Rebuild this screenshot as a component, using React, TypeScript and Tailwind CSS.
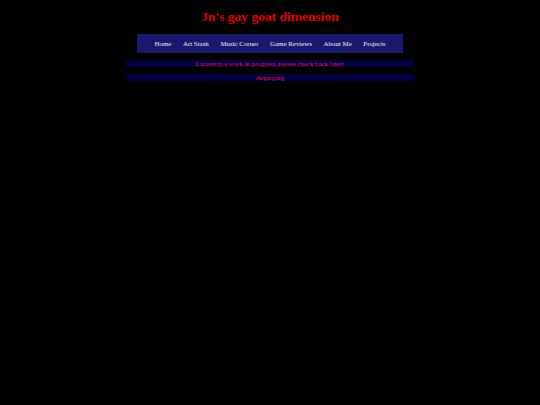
import React from "react";

export default function App() {
  const links = ["Home", "Art Stash", "Music Corner", "Game Reviews", "About Me", "Projects"];
  return (
    <div className="min-h-[405px] w-full bg-black" style={{ fontFamily: '"Liberation Serif", serif' }}>
      <div className="flex flex-col items-center pt-[9px]">
        <h1 className="text-[13.5px] font-bold leading-[16px] text-[#e00000]">Jn's gay goat dimension</h1>
        <nav className="mt-[9px] flex h-[19px] w-[266px] items-center justify-center gap-[11.6px] bg-[#191970] pt-[2px]">
          {links.map((l) => (
            <a key={l} className="text-[6.9px] leading-none text-[#ececf4]">
              {l}
            </a>
          ))}
        </nav>
        <div className="mt-[7px] flex h-[7px] w-[288px] items-center justify-center bg-[#000040] pt-[1px] text-[6.9px] leading-none text-[#e8163c]">
          Currently a work in progress, please check back later!
        </div>
        <div className="mt-[7px] flex h-[7px] w-[288px] items-center justify-center bg-[#000040] pt-[1px] text-[6.9px] leading-none text-[#e8163c]">
          Argargarg
        </div>
      </div>
    </div>
  );
}
